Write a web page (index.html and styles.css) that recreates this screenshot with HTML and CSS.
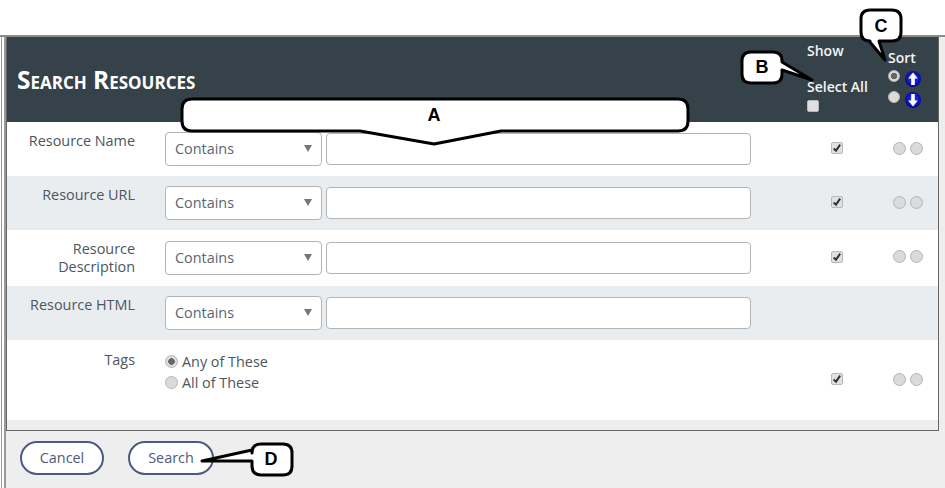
FILE: index.html
```html
<!DOCTYPE html>
<html lang="en">
<head>
<meta charset="utf-8">
<title>Search Resources</title>
<link rel="stylesheet" href="styles.css">
</head>
<body>
<div class="top"></div>
<div class="stage">
  <div class="edge"></div>
  <main class="main">
    <section class="panel">
      <header class="head">
        <h1 class="title">Search Resources</h1>
        <div class="show-col">
          <div class="show-label">Show</div>
          <div class="select-all">Select All</div>
          <span class="box"></span>
        </div>
        <div class="sort-col">
          <div class="sort-label">Sort</div>
          <div class="sort-line">
            <span class="radio sel"></span>
            <svg class="arrow" viewBox="0 0 16 16"><defs><radialGradient id="ball" cx="50%" cy="45%" r="60%"><stop offset="0" stop-color="#2a3cf0"/><stop offset="1" stop-color="#00008c"/></radialGradient></defs><circle cx="8" cy="8" r="8" fill="url(#ball)"/><path d="M8 1.5 12.8 7.5H9.8V14H6.2V7.5H3.2Z" fill="#fff"/></svg>
          </div>
          <div class="sort-line">
            <span class="radio"></span>
            <svg class="arrow" viewBox="0 0 16 16"><circle cx="8" cy="8" r="8" fill="url(#ball)"/><path d="M8 14.5 12.8 8.5H9.8V2H6.2V8.5H3.2Z" fill="#fff"/></svg>
          </div>
        </div>
      </header>

      <div class="row r54">
        <div class="label">Resource Name</div>
        <div class="select">Contains<i class="caret"></i></div>
        <div class="input"></div>
        <span class="box on"><svg viewBox="0 0 12 12"><path d="M2 6.5 4.8 9.2 9.8 2" fill="none" stroke="#333" stroke-width="2.4"/></svg></span>
        <div class="pair"><span class="radio"></span><span class="radio"></span></div>
      </div>
      <div class="row r54 alt">
        <div class="label">Resource URL</div>
        <div class="select">Contains<i class="caret"></i></div>
        <div class="input"></div>
        <span class="box on"><svg viewBox="0 0 12 12"><path d="M2 6.5 4.8 9.2 9.8 2" fill="none" stroke="#333" stroke-width="2.4"/></svg></span>
        <div class="pair"><span class="radio"></span><span class="radio"></span></div>
      </div>
      <div class="row r56">
        <div class="label">Resource Description</div>
        <div class="select">Contains<i class="caret"></i></div>
        <div class="input"></div>
        <span class="box on"><svg viewBox="0 0 12 12"><path d="M2 6.5 4.8 9.2 9.8 2" fill="none" stroke="#333" stroke-width="2.4"/></svg></span>
        <div class="pair"><span class="radio"></span><span class="radio"></span></div>
      </div>
      <div class="row r54 alt">
        <div class="label">Resource HTML</div>
        <div class="select">Contains<i class="caret"></i></div>
        <div class="input"></div>
      </div>
      <div class="row tags">
        <div class="label">Tags</div>
        <div class="choices">
          <div class="choice"><span class="radio sel"></span>Any of These</div>
          <div class="choice"><span class="radio"></span>All of These</div>
        </div>
        <span class="box on"><svg viewBox="0 0 12 12"><path d="M2 6.5 4.8 9.2 9.8 2" fill="none" stroke="#333" stroke-width="2.4"/></svg></span>
        <div class="pair"><span class="radio"></span><span class="radio"></span></div>
      </div>
      <div class="band"></div>
    </section>
    <footer class="actions">
      <button class="btn" type="button">Cancel</button>
      <button class="btn" type="button">Search</button>
    </footer>
  </main>
</div>

<svg class="callouts" viewBox="0 0 945 488" width="945" height="488">
  <path class="shape" d="M192 99H678Q688 99 688 109V121Q688 131 678 131H501L434 144 360 131H192Q182 131 182 121V109Q182 99 192 99Z"/>
  <text class="mark" x="434" y="121">A</text>
  <path class="shape" d="M751 52H773Q782 52 782 61V62L812 80 782 70V74Q782 83 773 83H751Q742 83 742 74V61Q742 52 751 52Z"/>
  <text class="mark" x="762" y="73">B</text>
  <path class="shape" d="M870 10H892Q901 10 901 19V32Q901 41 892 41H879L885 60 869 41H870Q861 41 861 32V19Q861 10 870 10Z"/>
  <text class="mark" x="881" y="32">C</text>
  <path class="shape" d="M261 444H283Q292 444 292 453V466Q292 475 283 475H261Q252 475 252 466V461L202 461 252 450V453Q252 444 261 444Z"/>
  <text class="mark" x="271" y="465">D</text>
</svg>
</body>
</html>
```
FILE: styles.css
```css
* { box-sizing: border-box; }
html, body { margin: 0; height: 100%; }
body {
  position: relative;
  width: 945px;
  height: 488px;
  overflow: hidden;
  background: #fff;
  font-family: "Open Sans", "Noto Sans", sans-serif;
  font-size: 14.4px;
  color: #4b5660;
}
.top { height: 35px; background: #fff; }
.stage {
  display: flex;
  height: 453px;
  background: #eee;
  border-top: 2px solid #8a8a8a;
}
.edge {
  width: 6px;
  background: linear-gradient(to right, #fff 0 1px, #999 1px 2px, #fff 2px 4px, #999 4px 6px);
}
.main { width: 933px; }
.panel {
  border: 1px solid #666;
  border-top: 0;
  background: #fff;
  height: 394px;
}
.head {
  display: flex;
  height: 85px;
  background: #364249;
  color: #f2f4f5;
  font-weight: 600;
  font-size: 14px;
}
.title {
  margin: 0;
  padding: 28px 0 0 10px;
  width: 800px;
  font-size: 24.4px;
  line-height: 30px;
  font-weight: 700;
  font-variant: small-caps;
  color: #fff;
}
.show-col { width: 81px; padding-top: 4px; line-height: 20px; }
.select-all { margin-top: 16px; }
.show-col .box { margin-top: 3px; display: block; }
.sort-col { padding-top: 11px; line-height: 20px; }
.sort-line { display: flex; gap: 5px; height: 21px; }
.sort-label { margin-bottom: -1px; }
.sort-line .radio { margin-top: 3px; width: 12px; height: 12px; }
.arrow { width: 16px; height: 16px; margin-top: 4px; }
.box {
  display: inline-block;
  width: 12px;
  height: 12px;
  background: #e0e0e0;
  border: 1px solid #b8b8b8;
  border-radius: 2px;
}
.box svg { display: block; width: 10px; height: 10px; }
.radio {
  display: inline-block;
  flex: none;
  width: 13px;
  height: 13px;
  border-radius: 50%;
  background: #dadada;
  border: 1px solid #b5b5b5;
}
.radio.sel { background: radial-gradient(circle, #666 0 3px, #ddd 3.6px); }
.row {
  display: grid;
  grid-template-columns: 128px 191px 425px 80px 12px 1fr;
  align-items: start;
  padding-top: 10px;
}
.r54 { height: 54px; }
.r56 { height: 56px; padding-top: 11px; }
.alt { background: #eaedf0; }
.label { line-height: 18px; text-align: right; }
.r56 .label { margin-top: -1px; }
.select {
  grid-column: 2;
  margin-left: 30px;
  width: 157px;
  height: 34px;
  display: flex;
  align-items: center;
  justify-content: space-between;
  padding: 0 9px 2px 9px;
  background: #fff;
  border: 1px solid #b4b4b4;
  border-radius: 4px;
  color: #5a6570;
}
.caret {
  width: 0;
  height: 0;
  border-left: 4px solid transparent;
  border-right: 4px solid transparent;
  border-top: 7px solid #777;
}
.input {
  grid-column: 3;
  height: 32px;
  margin-top: 1px;
  background: #fff;
  border: 1px solid #b4b4b4;
  border-radius: 4px;
}
.row > .box { grid-column: 5; margin-top: 10px; }
.pair {
  grid-column: 6;
  display: flex;
  gap: 4px;
  margin: 10px 0 0 50px;
}
.r56 .pair { margin-top: 9px; }
.tags { height: 80px; padding-top: 10px; }
.tags .label { margin-top: 1px; }
.tags .choices { grid-column: 2 / span 2; margin-left: 30px; margin-top: 1px; }
.choice { display: flex; align-items: center; gap: 4px; height: 21px; }
.tags > .box { margin-top: 23px; }
.tags .pair { margin-top: 23px; }
.band { height: 10px; background: #eee; }
.actions { display: flex; gap: 24px; padding: 10px 0 0 14px; }
.btn {
  width: 84px;
  height: 34px;
  padding: 0 0 2px;
  font: 14.4px "Open Sans", "Noto Sans", sans-serif;
  color: #4d5b78;
  background: #fff;
  border: 2px solid #4a5a80;
  border-radius: 17px;
}
.btn + .btn { width: 86px; }
.callouts { position: absolute; left: 0; top: 0; pointer-events: none; }
.shape { fill: #fff; stroke: #000; stroke-width: 3; stroke-linejoin: round; }
.mark { font: 700 18px "Liberation Sans", sans-serif; fill: #000; text-anchor: middle; }
```
